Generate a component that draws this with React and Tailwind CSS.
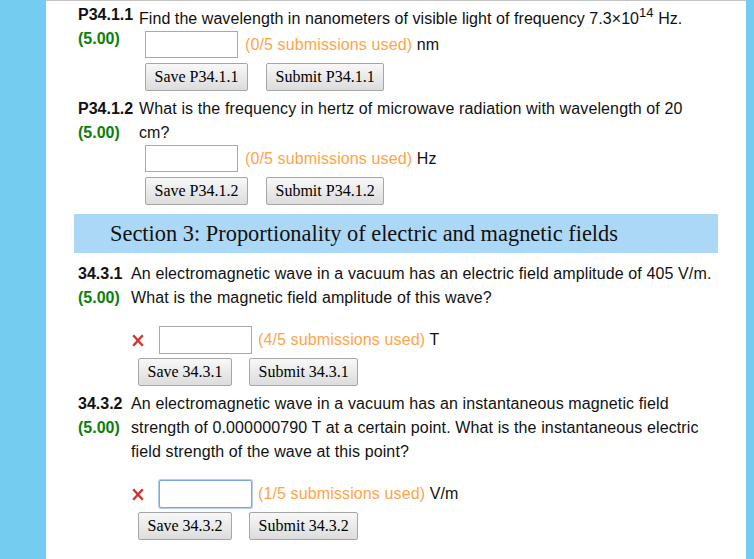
import React from "react";

const serif = "font-['Liberation_Serif','Times_New_Roman',serif]";

function Btn({ children }) {
  return (
    <button
      className={`h-[28px] px-[8.5px] border border-[#a6a6a6] rounded-[2px] bg-linear-to-b from-[#f8f8f8] to-[#dcdcdc] ${serif} text-[16px] leading-none tracking-normal text-black`}
    >
      {children}
    </button>
  );
}

function XMark() {
  return (
    <svg width="12" height="13" viewBox="0 0 12 13" className="block">
      <path d="M1.2 1.2 L10.8 11.8 M10.8 1.2 L1.2 11.8" stroke="#d4322f" strokeWidth="2.4" strokeLinecap="butt" fill="none" />
    </svg>
  );
}

function Label({ id, w }) {
  return (
    <div className={`${w} shrink-0 font-bold leading-[24px] tracking-normal`}>
      <div className="text-[#111]">{id}</div>
      <div className="text-[#0a800a]">(5.00)</div>
    </div>
  );
}

export default function App() {
  return (
    <div className="flex h-[559px] w-[754px] overflow-hidden bg-white font-['Liberation_Sans',Arial,sans-serif] text-[16px] text-[#111]">
      <div className="w-[46px] shrink-0 bg-[#74cdf1]" />
      <div className="flex-1 border-t border-[#c4c4c4]">
        <div className="px-[28px] pt-[2px]">
          {/* P34.1.1 */}
          <div className="flex pl-[4px]">
            <Label id="P34.1.1" w="w-[61px]" />
            <div className="flex-1 tracking-[0.12px]">
              <div className="pt-[4px] leading-[24px] whitespace-nowrap tracking-[0.06px]">
                Find the wavelength in nanometers of visible light of frequency 7.3×10
                <span className="relative -top-[7px] text-[13px] leading-none">14</span> Hz.
              </div>
              <div className="flex h-[27px] items-center pl-[6px]">
                <input className="h-[27px] w-[93px] border border-[#a9a9a9] bg-white outline-none" />
                <span className="ml-[7px] whitespace-nowrap">
                  <span className="text-[#ffa448]">(0/5 submissions used)</span> nm
                </span>
              </div>
              <div className="mt-[5px] flex gap-[18px] pl-[6px]">
                <Btn>Save P34.1.1</Btn>
                <Btn>Submit P34.1.1</Btn>
              </div>
            </div>
          </div>

          {/* P34.1.2 */}
          <div className="mt-[6px] flex pl-[4px]">
            <Label id="P34.1.2" w="w-[61px]" />
            <div className="flex-1 tracking-[0.12px]">
              <div className="leading-[24px] whitespace-nowrap">
                <div>What is the frequency in hertz of microwave radiation with wavelength of 20</div>
                <div>cm?</div>
              </div>
              <div className="flex h-[27px] items-center pl-[6px]">
                <input className="h-[27px] w-[93px] border border-[#a9a9a9] bg-white outline-none" />
                <span className="ml-[7px] whitespace-nowrap">
                  <span className="text-[#ffa448]">(0/5 submissions used)</span> Hz
                </span>
              </div>
              <div className="mt-[5px] flex gap-[18px] pl-[6px]">
                <Btn>Save P34.1.2</Btn>
                <Btn>Submit P34.1.2</Btn>
              </div>
            </div>
          </div>

          {/* Section header */}
          <div className={`mt-[9px] flex h-[39px] items-center bg-[#acd8f7] pl-[36px] ${serif} text-[22.4px] text-[#111]`}>
            Section 3: Proportionality of electric and magnetic fields
          </div>

          {/* 34.3.1 */}
          <div className="mt-[9px] flex pl-[4px]">
            <Label id="34.3.1" w="w-[53px]" />
            <div className="flex-1 tracking-[0.12px]">
              <div className="leading-[24px] whitespace-nowrap">
                <div>An electromagnetic wave in a vacuum has an electric field amplitude of 405 V/m.</div>
                <div>What is the magnetic field amplitude of this wave?</div>
              </div>
              <div className="mt-[16px] flex h-[28px] items-center pl-[1px]">
                <XMark />
                <input className="ml-[15px] h-[28px] w-[93px] border border-[#a9a9a9] bg-white outline-none" />
                <span className="ml-[6px] whitespace-nowrap">
                  <span className="text-[#ffa448]">(4/5 submissions used)</span> T
                </span>
              </div>
              <div className="mt-[4px] flex gap-[17px] pl-[7px]">
                <Btn>Save 34.3.1</Btn>
                <Btn>Submit 34.3.1</Btn>
              </div>
            </div>
          </div>

          {/* 34.3.2 */}
          <div className="mt-[6px] flex pl-[4px]">
            <Label id="34.3.2" w="w-[53px]" />
            <div className="flex-1 tracking-[0.12px]">
              <div className="leading-[24px] whitespace-nowrap">
                <div>An electromagnetic wave in a vacuum has an instantaneous magnetic field</div>
                <div>strength of 0.000000790 T at a certain point. What is the instantaneous electric</div>
                <div>field strength of the wave at this point?</div>
              </div>
              <div className="mt-[16px] flex h-[28px] items-center pl-[1px]">
                <XMark />
                <input className="ml-[15px] h-[28px] w-[93px] rounded-[2px] border border-[#7aa5e6] bg-white shadow-[0_0_0_1px_#b3cdf3] outline-none" />
                <span className="ml-[6px] whitespace-nowrap">
                  <span className="text-[#ffa448]">(1/5 submissions used)</span> V/m
                </span>
              </div>
              <div className="mt-[4px] flex gap-[17px] pl-[7px]">
                <Btn>Save 34.3.2</Btn>
                <Btn>Submit 34.3.2</Btn>
              </div>
            </div>
          </div>
        </div>
      </div>
      <div className="w-[8px] shrink-0 bg-[#74cdf1]" />
    </div>
  );
}
